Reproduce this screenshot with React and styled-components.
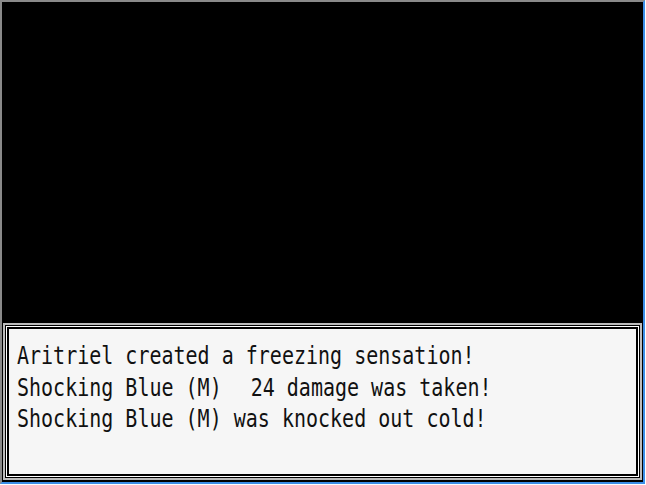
import React from 'react'
import styled, {createGlobalStyle} from 'styled-components'

const Global = createGlobalStyle`
  html, body {
    margin: 0;
    padding: 0;
    background: #ffffff;
  }
`

const Root = styled.div`
  width: 646px;
  height: 485px;
  box-sizing: border-box;
  padding: 0 1px 1px 0;
  background: #ffffff;
  display: flex;
`

const Frame = styled.div`
  flex: 1;
  display: flex;
  flex-direction: column;
  background: #000000;
  border-top: 2px solid #8a8a8a;
  border-left: 2px solid #8a8a8a;
  border-right: 2px solid #3c8fe8;
  border-bottom: 2px solid #3c8fe8;
`

const Screen = styled.div`
  flex: 1;
  background: #000000;
`

const Dialog = styled.div`
  height: 153px;
  margin: 0 1px 2px 1px;
  border: 2px solid #bcbcbc;
  background: #000000;
  display: flex;
`

const Ring = styled.div`
  flex: 1;
  display: flex;
  border: 1px solid ${p => p.color};
`

const Panel = styled.div`
  flex: 1;
  border: 2px solid #000000;
  background: #f6f6f6;
  padding: 9px 0 0 8px;
  font-family: "DejaVu Sans Mono", "Liberation Mono", monospace;
  font-size: 20px;
  color: #111111;
  white-space: pre;
`

const Line = styled.div`
  height: 31.5px;
  line-height: 26px;
  transform: scaleY(1.28);
  transform-origin: top left;
`

const Gap = styled.span`
  display: inline-block;
  width: 29px;
`

const App = () => {
  return (
    <Root>
      <Global />
      <Frame>
        <Screen />
        <Dialog>
          <Ring color="#000000">
            <Ring color="#ffffff">
              <Panel>
                <Line>Aritriel created a freezing sensation!</Line>
                <Line>Shocking Blue (M)<Gap />24 damage was taken!</Line>
                <Line>Shocking Blue (M) was knocked out cold!</Line>
              </Panel>
            </Ring>
          </Ring>
        </Dialog>
      </Frame>
    </Root>
  )
}

export default App
